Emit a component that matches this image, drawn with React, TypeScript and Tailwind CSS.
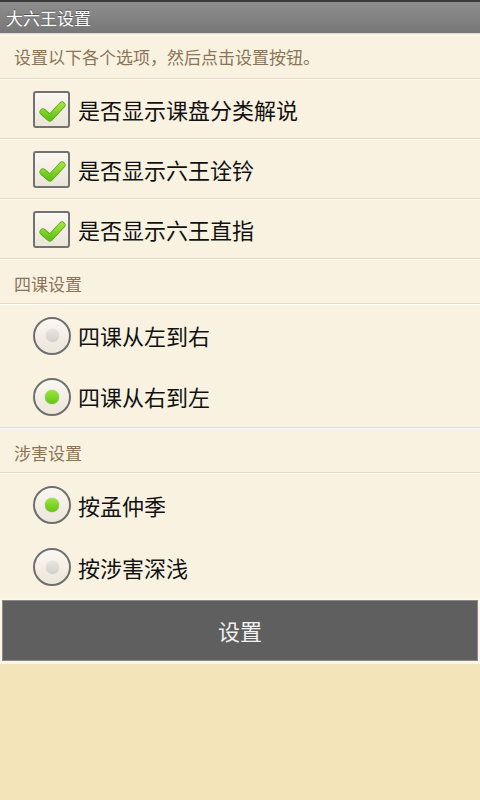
import React, { useState } from 'react'

const font = "font-['Noto_Sans_CJK_SC','Noto_Sans',sans-serif]"

const Divider: React.FC = () => (
  <div className="flex flex-col">
    <div className="h-px bg-[#e6dac2]" />
    <div className="h-px bg-[#fffdf7]" />
  </div>
)

const CheckBox: React.FC<{ checked: boolean }> = ({ checked }) => (
  <div className="w-[37px] h-[37px] shrink-0 rounded-[3px] border-2 border-[#727272] bg-gradient-to-b from-[#fbf8f1] to-[#ebe5d8] flex items-center justify-center">
    {checked && (
      <svg width="30" height="28" viewBox="0 0 30 28" className="mt-[3px]">
        <defs>
          <linearGradient id="chk" x1="0" y1="0" x2="0" y2="1">
            <stop offset="0" stopColor="#9ee03c" />
            <stop offset="1" stopColor="#66c417" />
          </linearGradient>
        </defs>
        <polyline
          points="6,15 13,21 25,8"
          fill="none"
          stroke="#58a814"
          strokeWidth="7"
          strokeLinecap="round"
          strokeLinejoin="round"
        />
        <polyline
          points="6,15 13,21 25,8"
          fill="none"
          stroke="url(#chk)"
          strokeWidth="5.5"
          strokeLinecap="round"
          strokeLinejoin="round"
        />
      </svg>
    )}
  </div>
)

const Radio: React.FC<{ checked: boolean }> = ({ checked }) => (
  <div className="w-[38px] h-[38px] shrink-0 rounded-full border-2 border-[#6f6f6f] bg-gradient-to-b from-[#fbf8f2] to-[#ece6da] flex items-center justify-center">
    {checked ? (
      <div className="w-[14px] h-[14px] rounded-full bg-gradient-to-b from-[#9be53a] to-[#62c414] shadow-[0_0_1px_#3f8a0a]" />
    ) : (
      <div className="w-[13px] h-[13px] rounded-full bg-gradient-to-b from-[#e8e6e1] to-[#d2cfca] shadow-[0_0_1px_#bbb]" />
    )}
  </div>
)

const SectionHeader: React.FC<{ text: string }> = ({ text }) => (
  <div className="h-[43px] flex items-center pl-[14px] pt-[4px] text-[17px] text-[#8b7558]">{text}</div>
)

export default function App() {
  const [checks, setChecks] = useState([true, true, true])
  const [order, setOrder] = useState(1)
  const [method, setMethod] = useState(0)

  const checkLabels = ['是否显示课盘分类解说', '是否显示六王诠钤', '是否显示六王直指']

  return (
    <div className={`w-[480px] h-[800px] flex flex-col bg-[#f9f2e1] ${font}`}>
      {/* Title bar */}
      <div className="flex flex-col">
        <div className="h-[2px] bg-[#3a3a3a]" />
        <div className="h-[31px] bg-gradient-to-b from-[#8e8e8e] to-[#777777] flex items-center pl-[6px] text-[17px] text-white [text-shadow:0_-1px_0_#555]">
          大六王设置
        </div>
        <div className="h-px bg-[#d8d8d8]" />
      </div>

      <div className="h-[44px] flex items-center pl-[14px] pt-[2px] text-[17px] text-[#8b7558]">
        设置以下各个选项，然后点击设置按钮。
      </div>
      <Divider />

      {checkLabels.map((label, i) => (
        <React.Fragment key={label}>
          <div
            className="h-[58px] flex items-center pl-[33px] gap-2 cursor-pointer"
            onClick={() => setChecks((c) => c.map((v, j) => (j === i ? !v : v)))}
          >
            <CheckBox checked={checks[i]} />
            <span className="text-[22px] text-[#111]">{label}</span>
          </div>
          <Divider />
        </React.Fragment>
      ))}

      <SectionHeader text="四课设置" />
      <Divider />
      {['四课从左到右', '四课从右到左'].map((label, i) => (
        <div
          key={label}
          className="h-[61px] flex items-center pl-[33px] gap-[7px] cursor-pointer"
          onClick={() => setOrder(i)}
        >
          <Radio checked={order === i} />
          <span className="text-[22px] text-[#111]">{label}</span>
        </div>
      ))}
      <Divider />

      <SectionHeader text="涉害设置" />
      <Divider />
      {['按孟仲季', '按涉害深浅'].map((label, i) => (
        <div
          key={label}
          className="h-[62px] flex items-center pl-[33px] gap-[7px] cursor-pointer"
          onClick={() => setMethod(i)}
        >
          <Radio checked={method === i} />
          <span className="text-[22px] text-[#111]">{label}</span>
        </div>
      ))}

      <div className="px-[2px] pt-[2px] pb-[3px] bg-[#fbf6ea]">
        <button className="w-full h-[61px] bg-[#5f5f5f] border border-[#8a8a8a] text-[22px] text-[#f0f0f0]">
          设置
        </button>
      </div>

      <div className="flex-1 bg-[#f4e4b9]" />
    </div>
  )
}
